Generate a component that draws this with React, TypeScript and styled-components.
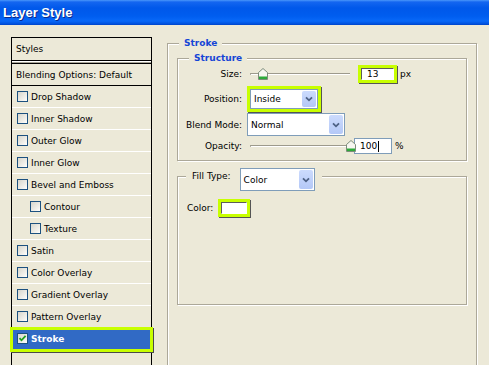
import React from 'react';
import styled, { createGlobalStyle } from 'styled-components';

const LIME = '#C8FF00';
const FACE = '#ECE9D8';

const GlobalStyle = createGlobalStyle`
    html, body {
        margin: 0;
        padding: 0;
        background: ${FACE};
    }
    body {
        font-family: "DejaVu Sans", Tahoma, sans-serif;
        font-size: 9px;
        color: #000;
    }
`;

const Window = styled.div`
    width: 489px;
    height: 365px;
    overflow: hidden;
    background: ${FACE};
    display: flex;
    flex-direction: column;
`;

const TitleBar = styled.div`
    height: 25px;
    flex-shrink: 0;
    display: flex;
    align-items: center;
    padding-left: 3px;
    box-sizing: border-box;
    background: linear-gradient(
        to bottom,
        #4A97FA 0px,
        #1466F0 2px,
        #0058EA 8px,
        #005DEF 16px,
        #0868F8 21px,
        #0050DC 24px,
        #0042C6 25px
    );
    color: #fff;
    font: bold 13px "Liberation Sans", Arial, sans-serif;
    text-shadow: 1px 1px 0 #0A2A8C;
`;

const Content = styled.div`
    display: flex;
    align-items: flex-start;
    gap: 15px;
    padding: 12px 0 0 11px;
`;

/* ---------- left list ---------- */

const StyleList = styled.div`
    width: 141px;
    height: 340px;
    flex-shrink: 0;
    box-sizing: border-box;
    border: 1px solid #000;
    border-bottom: none;
`;

const ListHeader = styled.div`
    height: 22px;
    display: flex;
    align-items: center;
    padding-left: 4px;
    border-bottom: 1px solid #000;
`;

const HeaderRule = styled.div`
    height: 1px;
    border-top: 1px solid #fff;
    background: #A7A496;
`;

const BlendRow = styled.div`
    height: 21px;
    display: flex;
    align-items: center;
    padding-left: 4px;
    border-top: 1px solid #000;
    border-bottom: 1px solid #000;
`;

const Row = styled.div<{ $indent?: boolean; $selected?: boolean }>`
    position: relative;
    height: 21px;
    display: flex;
    align-items: center;
    gap: 3px;
    padding-left: ${(p) => (p.$indent ? 18 : 5)}px;
    border-bottom: 1px solid #fff;
    background: ${(p) => (p.$selected ? '#316AC5' : 'transparent')};
    color: ${(p) => (p.$selected ? '#fff' : '#000')};
    font-weight: ${(p) => (p.$selected ? 'bold' : 'normal')};

    ${(p) =>
        p.$selected &&
        `
        &::after {
            content: '';
            position: absolute;
            top: -1px;
            left: -2px;
            right: -2px;
            bottom: -3px;
            border: 3px solid ${LIME};
            box-shadow: 1px 1px 0 #4a4a4a;
        }
    `}
`;

const Box = styled.span`
    width: 11px;
    height: 11px;
    flex-shrink: 0;
    box-sizing: border-box;
    border: 1px solid #1C5180;
    background: linear-gradient(135deg, #D6D5CC 0%, #F2F1EC 70%, #fff 100%);
    display: inline-flex;
    align-items: center;
    justify-content: center;
`;

const CheckBox: React.FC<{ checked?: boolean }> = ({ checked }) => (
    <Box>
        {checked && (
            <svg width="9" height="9" viewBox="0 0 9 9">
                <path d="M1.5 4.2 L3.5 6.3 L7.6 1.8" fill="none" stroke="#21A121" strokeWidth="1.8" />
            </svg>
        )}
    </Box>
);

/* ---------- group boxes ---------- */

const Group = styled.fieldset<{ $width: number; $height?: number }>`
    margin: 0;
    padding: 0;
    min-width: 0;
    width: ${(p) => p.$width}px;
    ${(p) => (p.$height ? `height: ${p.$height}px;` : '')}
    box-sizing: border-box;
    flex-shrink: 0;
    border: 1px solid #ACA899;
    box-shadow: 1px 1px 0 #fff, inset 1px 1px 0 #fff;
`;

const Legend = styled.legend`
    margin-left: 11px;
    padding: 0 5px;
    height: 12px;
    line-height: 12px;
    font-weight: bold;
    color: #1545D6;
    background: ${FACE};
`;

const FillLegend = styled.legend`
    margin-left: 8px;
    padding: 0 7px 0 6px;
    height: 16px;
    display: flex;
    align-items: flex-start;
    gap: 9px;
    background: ${FACE};
`;

const FillLabel = styled.span`
    line-height: 16px;
`;

const OuterBody = styled.div`
    padding: 3px 9px 0;
    display: flex;
    flex-direction: column;
    gap: 7px;
`;

const StructureBody = styled.div`
    display: flex;
    flex-direction: column;
    padding: 2px 0 6px;
`;

const FillBody = styled.div`
    height: 105px;
    padding: 15px 0 0 9px;
`;

const FieldRow = styled.div<{ $h: number; $mt: number }>`
    height: ${(p) => p.$h}px;
    margin-top: ${(p) => p.$mt}px;
    display: flex;
    align-items: center;
`;

const Label = styled.span`
    width: 64px;
    margin-right: 5px;
    text-align: right;
    flex-shrink: 0;
`;

/* ---------- controls ---------- */

const SliderWrap = styled.div`
    position: relative;
    width: 107px;
    height: 14px;
    flex-shrink: 0;
`;

const Track = styled.div`
    margin: 6px 4px 0 3px;
    height: 1px;
    border-top: 1px solid #9D9A8C;
    border-left: 1px solid #9D9A8C;
    border-radius: 2px 0 0 2px;
    background: #fff;
`;

const Thumb = styled.svg`
    position: absolute;
    top: 1px;
`;

const Slider: React.FC<{ pct: number }> = ({ pct }) => (
    <SliderWrap>
        <Track />
        <Thumb width="10" height="12" viewBox="0 0 10 12" style={{ left: 7 + pct * 92 }}>
            <path d="M0.5 4.5 L5 0.5 L9.5 4.5 V11.5 H0.5 Z" fill="#F7F6F1" stroke="#7D8D7A" />
            <rect x="1" y="8.5" width="8" height="2.5" fill="#2DAA3A" />
        </Thumb>
    </SliderWrap>
);

const LimeBox = styled.div<{ $ml?: number }>`
    display: inline-flex;
    flex-shrink: 0;
    border: 3px solid ${LIME};
    box-shadow: 1px 1px 0 #555;
    margin-left: ${(p) => p.$ml ?? 0}px;
`;

const TextBox = styled.div<{ $w: number; $h: number; $plain?: boolean }>`
    width: ${(p) => p.$w}px;
    height: ${(p) => p.$h}px;
    box-sizing: border-box;
    background: #fff;
    display: flex;
    align-items: center;
    padding-left: 5px;
    border: 1px solid;
    border-color: ${(p) => (p.$plain ? '#7F9DB9' : '#5C5C5C #fff #fff #5C5C5C')};
    flex-shrink: 0;
`;

const Caret = styled.span`
    width: 1px;
    height: 11px;
    background: #000;
    margin-left: 1px;
`;

const Unit = styled.span`
    margin-left: 3px;
`;

const SelectBox = styled.div<{ $w: number; $h: number }>`
    width: ${(p) => p.$w}px;
    height: ${(p) => p.$h}px;
    box-sizing: border-box;
    border: 1px solid #7F9DB9;
    background: #fff;
    display: flex;
    align-items: stretch;
    flex-shrink: 0;
`;

const SelectText = styled.span`
    flex: 1;
    display: flex;
    align-items: center;
    padding-left: 3px;
`;

const ArrowButton = styled.span`
    width: 14px;
    margin: 1px;
    border-radius: 2px;
    background: linear-gradient(to bottom, #CCDBFD, #B4C8F7);
    display: flex;
    align-items: center;
    justify-content: center;
`;

const Select: React.FC<{ value: string; w: number; h: number }> = ({ value, w, h }) => (
    <SelectBox $w={w} $h={h}>
        <SelectText>{value}</SelectText>
        <ArrowButton>
            <svg width="8" height="6" viewBox="0 0 8 6">
                <path d="M1 1.3 L4 4.3 L7 1.3" fill="none" stroke="#4D6185" strokeWidth="1.8" />
            </svg>
        </ArrowButton>
    </SelectBox>
);

const ColorRow = styled.div`
    height: 18px;
    display: flex;
    align-items: center;
    gap: 5px;
`;

const styleItems: { name: string; indent?: boolean }[] = [
    { name: 'Drop Shadow' },
    { name: 'Inner Shadow' },
    { name: 'Outer Glow' },
    { name: 'Inner Glow' },
    { name: 'Bevel and Emboss' },
    { name: 'Contour', indent: true },
    { name: 'Texture', indent: true },
    { name: 'Satin' },
    { name: 'Color Overlay' },
    { name: 'Gradient Overlay' },
    { name: 'Pattern Overlay' },
];

const App: React.FC = () => {
    const size = 13;
    const opacity = 100;

    return (
        <>
            <GlobalStyle />
            <Window>
                <TitleBar>Layer Style</TitleBar>
                <Content>
                    <StyleList>
                        <ListHeader>Styles</ListHeader>
                        <HeaderRule />
                        <BlendRow>Blending Options: Default</BlendRow>
                        {styleItems.map((item) => (
                            <Row key={item.name} $indent={item.indent}>
                                <CheckBox />
                                {item.name}
                            </Row>
                        ))}
                        <Row $selected>
                            <CheckBox checked />
                            Stroke
                        </Row>
                    </StyleList>

                    <Group $width={310} $height={345}>
                        <Legend>Stroke</Legend>
                        <OuterBody>
                            <Group $width={290}>
                                <Legend>Structure</Legend>
                                <StructureBody>
                                    <FieldRow $h={16} $mt={0}>
                                        <Label>Size:</Label>
                                        <Slider pct={(size - 1) / 249} />
                                        <LimeBox $ml={4}>
                                            <TextBox $w={33} $h={12}>{size}</TextBox>
                                        </LimeBox>
                                        <Unit>px</Unit>
                                    </FieldRow>
                                    <FieldRow $h={26} $mt={4}>
                                        <Label>Position:</Label>
                                        <LimeBox>
                                            <Select value="Inside" w={68} h={20} />
                                        </LimeBox>
                                    </FieldRow>
                                    <FieldRow $h={23} $mt={1}>
                                        <Label>Blend Mode:</Label>
                                        <Select value="Normal" w={98} h={23} />
                                    </FieldRow>
                                    <FieldRow $h={16} $mt={2}>
                                        <Label>Opacity:</Label>
                                        <Slider pct={opacity / 100} />
                                        <TextBox $w={38} $h={16} $plain>
                                            {opacity}
                                            <Caret />
                                        </TextBox>
                                        <Unit>%</Unit>
                                    </FieldRow>
                                </StructureBody>
                            </Group>

                            <Group $width={290}>
                                <FillLegend>
                                    <FillLabel>Fill Type:</FillLabel>
                                    <Select value="Color" w={75} h={23} />
                                </FillLegend>
                                <FillBody>
                                    <ColorRow>
                                        Color:
                                        <LimeBox>
                                            <TextBox $w={26} $h={12} />
                                        </LimeBox>
                                    </ColorRow>
                                </FillBody>
                            </Group>
                        </OuterBody>
                    </Group>
                </Content>
            </Window>
        </>
    );
};

export default App;
